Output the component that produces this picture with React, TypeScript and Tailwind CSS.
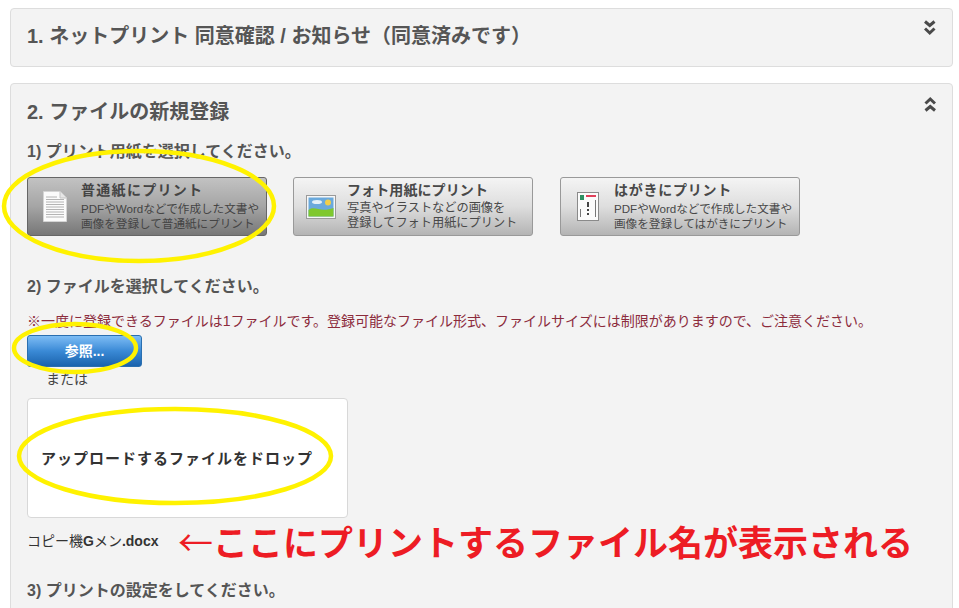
import React from 'react';

const font = "font-['Liberation_Sans','Noto_Sans_CJK_JP',sans-serif]";

const DocIcon = () => (
  <svg width="24" height="31" viewBox="0 0 24 31">
    <path d="M0.5 0.5H17L23.5 7V30.5H0.5Z" fill="#fbfbfb" stroke="#d5d5d5" />
    <path d="M17 0.5V7H23.5" fill="#e6e6e6" stroke="#c4c4c4" />
    <path d="M3 6H14M3 8.5H21M3 11H21M3 13.5H21M3 16H21M3 18.5H21M3 21H21M3 23.5H21M3 26H21" stroke="#b4b4b4" strokeWidth="1" />
  </svg>
);

const PhotoIcon = () => (
  <svg width="30" height="24" viewBox="0 0 30 24">
    <rect x="0.5" y="0.5" width="29" height="23" fill="#f7f7f7" stroke="#9a9a9a" />
    <rect x="2.5" y="2.5" width="25" height="19" fill="#6aa9dc" />
    <circle cx="22" cy="7.5" r="3" fill="#f2cf4a" />
    <ellipse cx="11" cy="7" rx="5" ry="2" fill="#e4f0f8" />
    <path d="M2.5 15C9 10 14 18 27.5 13V21.5H2.5Z" fill="#7fc82e" />
  </svg>
);

const HagakiIcon = () => (
  <svg width="22" height="29" viewBox="0 0 22 29">
    <rect x="0.5" y="0.5" width="21" height="28" fill="#fbfbfb" stroke="#8a8a8a" />
    <rect x="3" y="3" width="4" height="5" fill="#2f8f62" />
    <rect x="9" y="3" width="10" height="2" fill="#e0405a" />
    <path d="M18.5 8V25M3.5 17V25" stroke="#777" strokeWidth="1" />
    <path d="M11 10V15M11 17V19M11 21V23" stroke="#444" strokeWidth="2" />
  </svg>
);

const DoubleChevron = ({ up }: { up?: boolean }) => (
  <svg width="12" height="16" viewBox="0 0 12 16" className={up ? 'rotate-180' : ''}>
    <path d="M1 1.5L5.75 5.5L10.5 1.5M1 8.5L5.75 13L10.5 8.5" fill="none" stroke="#4a4a4a" strokeWidth="3" />
  </svg>
);

const PaperButton = ({
  icon,
  title,
  lines,
  selected,
  titleClass,
  lineClass,
  className,
}: {
  icon: React.ReactNode;
  title: string;
  lines: string[];
  selected?: boolean;
  titleClass: string;
  lineClass: string;
  className?: string;
}) => (
  <div
    className={`flex h-[59px] w-[240px] items-center rounded-[3px] border ${className ?? ''} ${
      selected
        ? 'border-[#666] bg-gradient-to-b from-[#c2c2c2] via-[#a5a5a5] to-[#777]'
        : 'border-[#999] bg-gradient-to-b from-[#f4f4f4] via-[#dedede] to-[#b4b4b4]'
    }`}
  >
    <div className="flex w-[53px] shrink-0 justify-center">{icon}</div>
    <div className={selected ? 'text-[#444]' : 'text-[#484848]'}>
      <p className={`text-[14px] leading-[15px] font-bold ${titleClass}`}>{title}</p>
      <p className={`mt-[3px] leading-[15px] whitespace-nowrap ${lineClass}`}>{lines[0]}</p>
      <p className={`leading-[15px] whitespace-nowrap ${lineClass}`}>{lines[1]}</p>
    </div>
  </div>
);

export default function App() {
  return (
    <div className={`relative h-[608px] w-[959px] overflow-hidden bg-white ${font}`}>
      <div className="pt-[8px] pr-[6px] pl-[10px]">
        <section className="flex h-[59px] justify-between rounded-[4px] border border-[#ddd] bg-[#f3f3f3] px-[16px]">
          <h2 className="mt-[13px] text-[20px] leading-[28px] font-bold text-[#555]">
            1. ネットプリント 同意確認 / お知らせ（同意済みです）
          </h2>
          <div className="mt-[11px]">
            <DoubleChevron />
          </div>
        </section>

        <section className="mt-[16px] h-[560px] rounded-[4px] border border-[#ddd] bg-[#f3f3f3] px-[16px]">
          <div className="flex justify-between">
            <h2 className="mt-[14px] text-[20px] leading-[28px] font-bold text-[#555]">2. ファイルの新規登録</h2>
            <div className="mt-[12px]">
              <DoubleChevron up />
            </div>
          </div>

          <h3 className="mt-[15px] text-[16px] leading-[22px] font-bold text-[#555]">1) プリント用紙を選択してください。</h3>
          <div className="mt-[14px] flex gap-[26px]">
            <PaperButton
              selected
              icon={<DocIcon />}
              title="普通紙にプリント"
              titleClass="tracking-[1.3px]"
              lineClass="text-[11.6px]"
              lines={['PDFやWordなどで作成した文書や', '画像を登録して普通紙にプリント']}
            />
            <PaperButton
              icon={<PhotoIcon />}
              title="フォト用紙にプリント"
              titleClass="tracking-[0.1px]"
              lineClass="text-[12.2px]"
              lines={['写真やイラストなどの画像を', '登録してフォト用紙にプリント']}
            />
            <PaperButton
              className="ml-[1px]"
              icon={<HagakiIcon />}
              title="はがきにプリント"
              titleClass="tracking-[0.75px]"
              lineClass="text-[11.6px]"
              lines={['PDFやWordなどで作成した文書や', '画像を登録してはがきにプリント']}
            />
          </div>

          <h3 className="mt-[40px] text-[16px] leading-[22px] font-bold text-[#555]">2) ファイルを選択してください。</h3>
          <p className="mt-[13px] text-[14px] leading-[20px] whitespace-nowrap text-[#8c2b3c]">
            ※一度に登録できるファイルは1ファイルです。登録可能なファイル形式、ファイルサイズには制限がありますので、ご注意ください。
          </p>
          <div className="mt-[4px] flex h-[32px] w-[115px] items-center justify-center rounded-[3px] border border-[#2a6fb0] bg-gradient-to-b from-[#7dbdf5] via-[#3a8ad6] to-[#1a63ad] text-[14px] font-bold text-white">
            参照...
          </div>
          <p className="mt-[2px] pl-[19px] text-[14px] leading-[20px] text-[#444]">または</p>
          <div className="mt-[9px] flex h-[120px] w-[321px] items-center rounded-[4px] border border-[#d8d8d8] bg-white pt-[2px] pl-[13px]">
            <span className="text-[15px] font-bold tracking-[1px] whitespace-nowrap text-[#333]">
              アップロードするファイルをドロップ
            </span>
          </div>
          <p className="mt-[14px] text-[14px] leading-[18px] text-[#333]">
            コピー機<span className="font-bold">G</span>メン<span className="font-bold">.docx</span>
          </p>
          <h3 className="mt-[30px] text-[16px] leading-[22px] font-bold text-[#555]">3) プリントの設定をしてください。</h3>
        </section>
      </div>

      {/* hand-drawn annotations over the capture */}
      <svg className="pointer-events-none absolute inset-0" width="959" height="608" viewBox="0 0 959 608">
        <ellipse cx="139" cy="206" rx="135" ry="55" fill="none" stroke="#fff200" strokeWidth="4.5" />
        <ellipse cx="75" cy="348" rx="61" ry="24" fill="none" stroke="#fff200" strokeWidth="4.5" />
        <ellipse cx="175" cy="456" rx="156" ry="47" fill="none" stroke="#fff200" strokeWidth="4.5" />
      </svg>
      <span className="absolute top-[515px] left-[178px] font-['Noto_Sans_CJK_JP',sans-serif] text-[35px] leading-[52px] font-bold whitespace-nowrap text-[#ed1c24]">
        <span className="font-normal">←</span>ここにプリントするファイル名が表示される
      </span>
    </div>
  );
}
